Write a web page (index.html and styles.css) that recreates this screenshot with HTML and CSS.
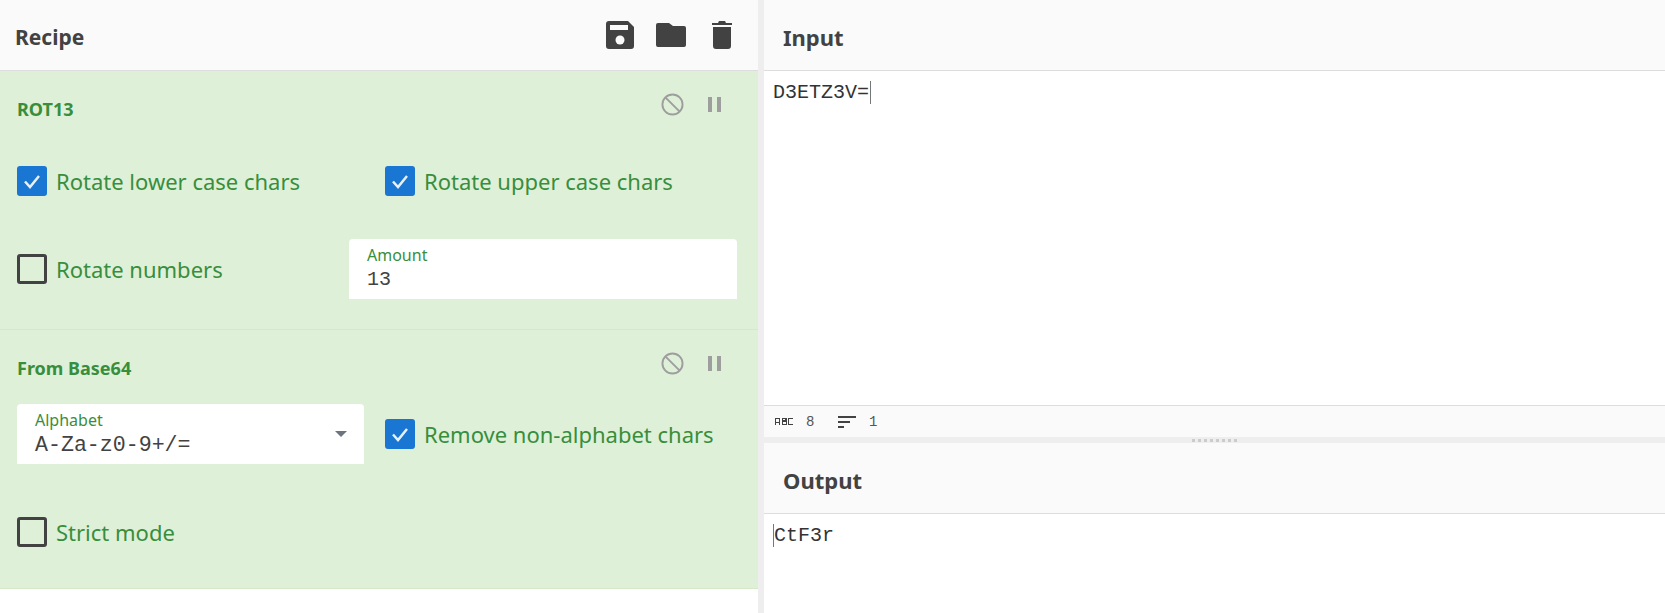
FILE: index.html
```html
<!DOCTYPE html>
<html>
<head>
    <meta name="viewport" content="width=device-width, initial-scale=1.0">
    <link rel="stylesheet" href="styles.css">
</head>
<body>
    <div class="recipe">
        <div class="pane-head">
            <div class="pane-title">Recipe</div>
            <div class="head-icons">
                <svg class="icon-save" viewBox="0 0 28 28"><path d="M3 0h19l6 6v19a3 3 0 0 1-3 3H3a3 3 0 0 1-3-3V3a3 3 0 0 1 3-3z"/><rect class="cut" x="4" y="4" width="18" height="5"/><circle class="cut" cx="14" cy="19" r="4.5"/></svg>
                <svg class="icon-folder" viewBox="0 0 30 24"><path d="M2 0h11l4 3h11a2 2 0 0 1 2 2v17a2 2 0 0 1-2 2H2a2 2 0 0 1-2-2V2a2 2 0 0 1 2-2z"/></svg>
                <svg class="icon-trash" viewBox="0 0 20 28"><path d="M7 0h6l1 2h6v2H0V2h6zM1 6h18v19a3 3 0 0 1-3 3H4a3 3 0 0 1-3-3z"/></svg>
            </div>
        </div>

        <div class="op">
            <div class="op-head">
                <div class="op-title">ROT13</div>
                <div class="op-icons">
                    <svg class="icon-off" viewBox="0 0 24 24"><circle cx="12" cy="12" r="10.5"/><path d="M4.5 4.5l15 15"/></svg>
                    <svg class="icon-pause" viewBox="0 0 13 15"><path d="M0 0h4v15H0zM9 0h4v15H9z"/></svg>
                </div>
            </div>
            <div class="row first-row">
                <label class="check wide">
                    <span class="box on"><svg viewBox="0 0 30 30"><path d="M8 15.5l5 5.5 9-11"/></svg></span>
                    <span>Rotate lower case chars</span>
                </label>
                <label class="check">
                    <span class="box on"><svg viewBox="0 0 30 30"><path d="M8 15.5l5 5.5 9-11"/></svg></span>
                    <span>Rotate upper case chars</span>
                </label>
            </div>
            <div class="row amount-row">
                <label class="check narrow">
                    <span class="box"></span>
                    <span>Rotate numbers</span>
                </label>
                <div class="field amount">
                    <div class="field-label">Amount</div>
                    <div class="field-value">13</div>
                </div>
            </div>
        </div>

        <div class="op">
            <div class="op-head">
                <div class="op-title">From Base64</div>
                <div class="op-icons">
                    <svg class="icon-off" viewBox="0 0 24 24"><circle cx="12" cy="12" r="10.5"/><path d="M4.5 4.5l15 15"/></svg>
                    <svg class="icon-pause" viewBox="0 0 13 15"><path d="M0 0h4v15H0zM9 0h4v15H9z"/></svg>
                </div>
            </div>
            <div class="row select-row">
                <div class="field alphabet">
                    <div class="field-label">Alphabet</div>
                    <div class="field-value big">A-Za-z0-9+/=</div>
                    <span class="arrow"></span>
                </div>
                <label class="check">
                    <span class="box on"><svg viewBox="0 0 30 30"><path d="M8 15.5l5 5.5 9-11"/></svg></span>
                    <span>Remove non-alphabet chars</span>
                </label>
            </div>
            <div class="row strict-row">
                <label class="check">
                    <span class="box"></span>
                    <span>Strict mode</span>
                </label>
            </div>
        </div>
    </div>

    <div class="gutter"></div>

    <div class="io">
        <div class="input-pane">
            <div class="pane-head">
                <div class="pane-title io-title">Input</div>
            </div>
            <div class="text-area"><span class="caret-after">D3ETZ3V=</span></div>
            <div class="status-bar">
                <svg class="icon-abc" viewBox="0 0 18 7"><path d="M0 0h5v7H4V5H1v2H0zM1 1v3h3V1zM7 0h5v7H7zM8 1v1h2V1zM8 4v2h3V4zM13 0h5v1h-4v5h4v1h-5z"/></svg>
                <span class="stat">8</span>
                <svg class="icon-lines" viewBox="0 0 18 12"><path d="M0 0h18v2H0zM0 5h12v2H0zM0 10h6v2H0z"/></svg>
                <span class="stat">1</span>
            </div>
        </div>
        <div class="h-gutter">
            <div class="dots">
                <i></i><i></i><i></i><i></i><i></i><i></i><i></i><i></i>
            </div>
        </div>
        <div class="pane-head">
            <div class="pane-title io-title">Output</div>
        </div>
        <div class="text-area"><span class="caret-before">CtF3r</span></div>
    </div>
</body>
</html>
```

FILE: styles.css
```css
* {
    margin: 0;
    padding: 0;
    box-sizing: border-box;
}

body {
    height: 100vh;
    background: white;
    color: #424242;
    font-family: "Noto Sans", sans-serif;
    display: grid;
    grid-template-columns: 758px 6px 1fr;
    overflow: hidden;
}

.pane-head {
    height: 71px;
    background: #fafafa;
    border-bottom: 1px solid #ddd;
    display: flex;
    justify-content: space-between;
    align-items: center;
    padding-left: 15px;
}

.pane-title {
    font-size: 21px;
    font-weight: 700;
    padding-top: 4px;
}

.io-title {
    padding-left: 4px;
    font-size: 22px;
}

.head-icons {
    display: flex;
    align-items: center;
    gap: 22px;
    padding-right: 26px;
    margin-top: -1px;
}

.head-icons svg {
    fill: #424242;
    display: block;
}

.icon-save { width: 28px; height: 28px; }
.icon-folder { width: 30px; height: 24px; }
.icon-trash { width: 20px; height: 28px; margin-left: 4px; }

.icon-save .cut {
    fill: #fafafa;
}

.op {
    height: 259px;
    background: #dff0d8;
    color: #388e3c;
    border-bottom: 1px solid #d6e9c6;
    padding: 0 21px 0 17px;
}

.op-head {
    height: 74px;
    display: flex;
    justify-content: space-between;
    align-items: center;
}

.op-title {
    font-size: 18px;
    font-weight: 700;
    padding-top: 1px;
}

.op-icons {
    display: flex;
    align-items: center;
    gap: 24px;
    padding-right: 16px;
    margin-top: -8px;
}

.icon-off {
    width: 23px;
    height: 23px;
    fill: none;
    stroke: #9e9e9e;
    stroke-width: 2;
}

.icon-pause {
    width: 13px;
    height: 15px;
    fill: #9e9e9e;
}

.row {
    display: flex;
    align-items: center;
}

.first-row { margin-top: 21px; }
.amount-row { margin-top: 43px; }
.select-row { margin-top: 0; }
.strict-row { margin-top: 53px; }

.check {
    display: flex;
    align-items: center;
    gap: 9px;
    font-size: 22px;
    line-height: 30px;
    white-space: nowrap;
}

.check.wide { width: 368px; }
.check.narrow { width: 332px; }

.box {
    width: 30px;
    height: 30px;
    flex: none;
    border: 3px solid #424242;
    border-radius: 3px;
}

.box.on {
    background: #1976d2;
    border: none;
}

.box svg {
    display: block;
    fill: none;
    stroke: #e8f1f8;
    stroke-width: 2.5;
}

.field {
    position: relative;
    height: 60px;
    background: white;
    border-radius: 4px 4px 0 0;
    padding: 6px 18px 0;
}

.field.amount { width: 388px; }
.field.alphabet { width: 347px; margin-right: 21px; }

.field-label {
    font-size: 16px;
    line-height: 21px;
}

.field-value {
    color: #424242;
    font-family: "Liberation Mono", monospace;
    font-size: 20px;
    line-height: 28px;
}

.field-value.big {
    font-size: 21.6px;
}

.arrow {
    position: absolute;
    right: 17px;
    top: 27px;
    border-left: 6px solid transparent;
    border-right: 6px solid transparent;
    border-top: 6px solid #6c757d;
}

.gutter {
    background: #eee;
}

.io {
    display: flex;
    flex-direction: column;
}

.input-pane {
    display: flex;
    flex-direction: column;
    height: 437px;
}

.text-area {
    flex: 1;
    padding: 10px 9px;
    font-family: "Liberation Mono", monospace;
    font-size: 20px;
    line-height: 23px;
    color: #333;
}

.caret-after { border-right: 1px solid #777; padding-right: 1px; }
.caret-before { border-left: 1px solid #777; }

.status-bar {
    height: 32px;
    background: #fafafa;
    border-top: 1px solid #ddd;
    display: flex;
    align-items: center;
    padding-left: 11px;
    color: #555;
    font-family: "Liberation Mono", monospace;
    font-size: 14px;
}

.stat {
    margin-left: 13px;
    width: 32px;
}

.icon-abc { width: 18px; height: 7px; fill: #424242; }
.icon-lines { width: 18px; height: 12px; fill: #424242; margin-left: 0; }

.h-gutter {
    height: 6px;
    background: #eee;
    display: flex;
    justify-content: center;
    align-items: center;
}

.dots {
    display: flex;
    gap: 3px;
}

.dots i {
    width: 3px;
    height: 3px;
    background: #ccc;
}
```
